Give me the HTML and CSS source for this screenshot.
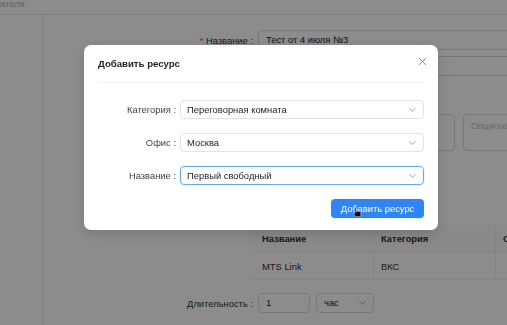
FILE: index.html
```html
<!DOCTYPE html>
<html lang="ru">
<head>
    <meta charset="UTF-8">
    <title>Добавить ресурс</title>
    <link rel="stylesheet" href="styles.css">
</head>
<body>
    <div class="topbar"><span>ателя</span></div>

    <div class="layout">
        <div class="sidebar"></div>

        <div class="main">
            <div class="form-row">
                <label class="form-label"><span class="req">*</span> Название :</label>
                <div class="field"><div class="input">Тест от 4 июля №3</div></div>
            </div>
            <div class="form-row">
                <label class="form-label">Организатор :</label>
                <div class="field"><div class="input"></div></div>
            </div>
            <div class="form-row row-text">
                <label class="form-label">Описание :</label>
                <div class="field areas">
                    <div class="area area-main"></div>
                    <div class="area">Опциональный комментарий</div>
                </div>
            </div>

            <div class="table">
                <div class="tr th">
                    <div class="cell c1">Название</div>
                    <div class="cell c2">Категория</div>
                    <div class="cell c3">Офис</div>
                </div>
                <div class="tr">
                    <div class="cell c1">MTS Link</div>
                    <div class="cell c2">ВКС</div>
                    <div class="cell c3"></div>
                </div>
            </div>

            <div class="form-row row-duration">
                <label class="form-label">Длительность :</label>
                <div class="field duration">
                    <div class="input small">1</div>
                    <div class="input unit">час <span class="chev"></span></div>
                </div>
            </div>
        </div>
    </div>

    <div class="mask"></div>

    <div class="modal">
        <div class="modal-head">
            <h2>Добавить ресурс</h2>
            <svg class="close" width="9" height="9" viewBox="0 0 10 10">
                <path d="M1 1L9 9M9 1L1 9" stroke="#8c8c8c" stroke-width="1.1" fill="none"/>
            </svg>
        </div>

        <div class="modal-body">
            <div class="m-row">
                <label class="m-label">Категория :</label>
                <div class="select">Переговорная комната <span class="chev"></span></div>
            </div>
            <div class="m-row">
                <label class="m-label">Офис :</label>
                <div class="select">Москва <span class="chev"></span></div>
            </div>
            <div class="m-row">
                <label class="m-label">Название :</label>
                <div class="select focused">Первый свободный <span class="chev"></span></div>
            </div>
        </div>

        <div class="modal-foot">
            <button class="btn-primary">Добавить ресурс</button>
            <svg class="cursor" width="10" height="10" viewBox="0 0 10 10">
                <path d="M3 0.5h1.4v4h1v-1h1.2v1h1.1v-0.6h1.2V8.5L7.6 9.8H3.6L1 6.6 2 5.8l1 1z" fill="#111" stroke="#fff" stroke-width="0.5"/>
            </svg>
        </div>
    </div>
</body>
</html>
```

FILE: styles.css
```css
* {
    margin: 0;
    padding: 0;
    box-sizing: border-box;
}

body {
    font-family: "Liberation Sans", Arial, sans-serif;
    font-size: 9.4px;
    color: #262626;
    background: #fff;
    width: 507px;
    height: 325px;
    overflow: hidden;
}

/* ---------- page behind the dialog ---------- */

.topbar {
    height: 15px;
    border-bottom: 1px solid #e6e6e6;
    overflow: hidden;
}

.topbar span {
    display: block;
    line-height: 8px;
    color: #b0b0b0;
}

.layout {
    display: flex;
    height: 310px;
}

.sidebar {
    width: 43px;
    border-right: 1px solid #ececec;
}

.main {
    flex: 1;
    padding-top: 15px;
    overflow: hidden;
}

.form-row {
    display: grid;
    grid-template-columns: 210px 1fr;
    column-gap: 5px;
    align-items: center;
    margin-bottom: 6px;
}

.form-label {
    text-align: right;
    color: #333;
    white-space: nowrap;
}

.req {
    color: #ff4d4f;
}

.input {
    height: 20px;
    border: 1px solid #d9d9d9;
    border-radius: 4px;
    padding: 0 7px;
    line-height: 18px;
    width: 400px;
    color: #262626;
    position: relative;
}

.row-text {
    margin-top: 38px;
    align-items: start;
}

.row-text .form-label {
    padding-top: 8px;
}

.areas {
    display: flex;
    gap: 8px;
}

.area {
    height: 37px;
    border: 1px solid #d9d9d9;
    border-radius: 4px;
    padding: 5px 7px;
    color: #bfbfbf;
    white-space: nowrap;
    width: 120px;
}

.area-main {
    width: 197px;
}

.table {
    margin: 74px 0 0 206px;
    width: 320px;
}

.tr {
    display: flex;
    border-bottom: 1px solid #f0f0f0;
}

.th {
    background: #fafafa;
    font-weight: bold;
    color: #1f1f1f;
}

.th .cell {
    height: 27px;
}

.cell {
    flex: none;
    height: 26px;
    display: flex;
    align-items: center;
    padding-left: 7px;
    color: #333;
    white-space: nowrap;
}

.c1 { width: 125px; padding-left: 13px; border-right: 1px solid #f0f0f0; }
.c2 { width: 122px; border-right: 1px solid #f0f0f0; }
.c3 { width: 73px; }

.row-duration {
    margin-top: 13px;
}

.duration {
    display: flex;
    gap: 6px;
}

.input.small {
    width: 52px;
}

.input.unit {
    width: 58px;
}

.chev {
    position: absolute;
    right: 8px;
    top: 50%;
    width: 5px;
    height: 5px;
    margin-top: -4px;
    border-right: 1px solid #bfbfbf;
    border-bottom: 1px solid #bfbfbf;
    transform: rotate(45deg);
}

/* ---------- overlay and dialog ---------- */

.mask {
    position: fixed;
    inset: 0;
    background: rgba(0, 0, 0, 0.45);
}

.modal {
    position: fixed;
    left: 84px;
    top: 45px;
    width: 354px;
    height: 185px;
    background: #fff;
    border-radius: 7px;
    box-shadow: 0 4px 14px rgba(0, 0, 0, 0.15);
    padding: 0 14px;
}

.modal-head {
    display: flex;
    justify-content: space-between;
    align-items: center;
    height: 38px;
    border-bottom: 1px solid #f2f2f2;
}

.modal-head h2 {
    font-size: 9.6px;
    font-weight: bold;
    color: #1f1f1f;
}

.close {
    margin-right: -3px;
    margin-top: -4px;
}

.modal-body {
    padding-top: 17px;
    display: flex;
    flex-direction: column;
    gap: 14px;
}

.m-row {
    display: flex;
    align-items: center;
}

.m-label {
    width: 82px;
    flex: none;
    text-align: right;
    padding-right: 4px;
    color: #444;
    white-space: nowrap;
}

.select {
    flex: 1;
    height: 19px;
    border: 1px solid #e3e3e3;
    border-radius: 4px;
    padding: 0 6px;
    line-height: 17px;
    color: #262626;
    position: relative;
}

.select.focused {
    border-color: #6aa8f7;
    box-shadow: 0 0 0 1px rgba(22, 119, 255, 0.08);
}

.modal-foot {
    display: flex;
    justify-content: flex-end;
    margin-top: 14px;
    position: relative;
}

.btn-primary {
    font-family: inherit;
    font-size: 9.4px;
    width: 93px;
    height: 19px;
    border: none;
    border-radius: 4px;
    background: #2f86f2;
    color: #fff;
    box-shadow: 0 1px 2px rgba(5, 145, 255, 0.15);
}

.cursor {
    position: absolute;
    left: 254px;
    top: 8px;
}
```
